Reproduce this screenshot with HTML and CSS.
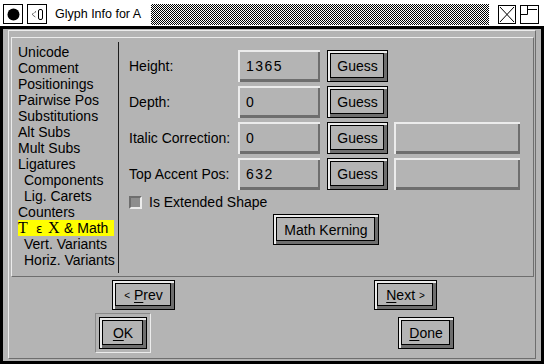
FILE: index.html
```html
<!DOCTYPE html>
<html lang="en">
<head>
    <meta charset="UTF-8">
    <title>Glyph Info for A</title>
    <link rel="stylesheet" href="styles.css">
</head>
<body>
    <div class="window">
        <div class="titlebar">
            <span class="tb-box">
                <svg width="18" height="18" viewBox="0 0 18 18"><circle cx="9.5" cy="9.5" r="6" fill="#000"/></svg>
            </span>
            <span class="tb-box gap">
                <svg width="18" height="18" viewBox="0 0 18 18">
                    <polyline points="8,6.5 4,9.5 8,12.5" fill="none" stroke="#000" stroke-dasharray="1 1"/>
                    <rect x="10.5" y="4.5" width="4" height="10" rx="1.5" fill="none" stroke="#000"/>
                </svg>
            </span>
            <span class="title">Glyph Info for A</span>
            <span class="stipple"></span>
            <span class="tb-box close">
                <svg width="16" height="17" viewBox="0 0 16 17"><path d="M1 1 L15 16 M15 1 L1 16" stroke="#000" fill="none"/></svg>
            </span>
            <span class="tb-box max">
                <svg width="17" height="17" viewBox="0 0 17 17"><path d="M6.5 0 V8.5 H0 M6.5 3.5 H16" stroke="#000" fill="none"/></svg>
            </span>
        </div>

        <div class="frame">
            <div class="dialog">
                <div class="tabset">
                    <ul class="tabs">
                        <li>Unicode</li>
                        <li>Comment</li>
                        <li>Positionings</li>
                        <li>Pairwise Pos</li>
                        <li>Substitutions</li>
                        <li>Alt Subs</li>
                        <li>Mult Subs</li>
                        <li>Ligatures</li>
                        <li class="sub">Components</li>
                        <li class="sub">Lig. Carets</li>
                        <li>Counters</li>
                        <li class="active"><span class="tex t">T</span><span class="eps">ε</span><span class="tex x">X</span>&amp; Math</li>
                        <li class="sub">Vert. Variants</li>
                        <li class="sub">Horiz. Variants</li>
                    </ul>
                    <div class="sep"></div>
                    <div class="pane">
                        <div class="fields">
                            <span class="label">Height:</span>
                            <span class="field">1365</span>
                            <button class="btn guess">Guess</button>
                            <span></span>

                            <span class="label">Depth:</span>
                            <span class="field">0</span>
                            <button class="btn guess">Guess</button>
                            <span></span>

                            <span class="label">Italic Correction:</span>
                            <span class="field">0</span>
                            <button class="btn guess">Guess</button>
                            <span class="field wide"></span>

                            <span class="label">Top Accent Pos:</span>
                            <span class="field">632</span>
                            <button class="btn guess">Guess</button>
                            <span class="field wide"></span>
                        </div>
                        <div class="check">
                            <span class="checkbox"></span>
                            <span>Is Extended Shape</span>
                        </div>
                        <div class="kern-row">
                            <button class="btn kern">Math Kerning</button>
                        </div>
                    </div>
                </div>

                <div class="nav-row">
                    <button class="btn nav prev"><span class="arrow">&lt;</span>&nbsp;<u>P</u>rev</button>
                    <button class="btn nav next"><u>N</u>ext&nbsp;<span class="arrow">&gt;</span></button>
                </div>
                <div class="nav-row ok-row">
                    <span class="default-frame">
                        <button class="btn ok"><u>O</u>K</button>
                    </span>
                    <button class="btn done"><u>D</u>one</button>
                </div>
            </div>
        </div>
    </div>
</body>
</html>
```

FILE: styles.css
```css
:root {
    --bg: #b4b4b4;
    --light: #ececec;
    --dark: #6e6e6e;
}

* {
    box-sizing: border-box;
    margin: 0;
    padding: 0;
}

body {
    background: var(--bg);
    font-family: 'Liberation Sans', Arial, sans-serif;
    font-size: 14px;
    color: #000;
}

.window {
    width: 544px;
    height: 364px;
    display: flex;
    flex-direction: column;
}

/* Title bar */
.titlebar {
    height: 29px;
    background: #fff;
    border-bottom: 3px solid #000;
    display: flex;
    align-items: flex-start;
    padding: 4px 5px 0 3px;
}

.tb-box {
    width: 20px;
    height: 20px;
    border: 1px solid #000;
    background: #fff;
    display: flex;
}

.tb-box.gap {
    margin-left: 4px;
}

.title {
    width: 96px;
    margin-left: 8px;
    line-height: 20px;
    font-size: 12.5px;
}

.stipple {
    flex: 1;
    height: 21px;
    margin-right: 9px;
    background: repeating-conic-gradient(#000 0 25%, #fff 0 50%) 0 0 / 2px 2px;
}

.tb-box.close {
    width: 18px;
    height: 19px;
    margin-top: 1px;
}

.tb-box.max {
    width: 19px;
    height: 19px;
    margin-top: 1px;
    margin-left: 4px;
}

/* Dialog body */
.frame {
    flex: 1;
    display: flex;
    background: var(--bg);
    border: 3px solid #000;
    border-top: 0;
    padding: 1px 5px 2px 5px;
}

.dialog {
    flex: 1;
    border: 1px solid;
    border-color: var(--light) var(--dark) var(--dark) var(--light);
    padding: 6px 1px 0 2px;
}

.tabset {
    height: 240px;
    display: flex;
    border: 1px solid;
    border-color: var(--light) var(--dark) var(--dark) var(--light);
}

.tabs {
    width: 106px;
    list-style: none;
    padding: 6px 0 0 6px;
}

.tabs li {
    width: 96px;
    height: 16px;
    line-height: 16px;
    white-space: nowrap;
}

.tabs li.sub {
    padding-left: 6px;
}

.tabs li.active {
    background: #ffff00;
}

.tex {
    display: inline-block;
    font-family: 'Liberation Serif', 'Times New Roman', serif;
    font-size: 16px;
}

.tex.t {
    width: 18px;
}

.tex.x {
    width: 16px;
}

.eps {
    display: inline-block;
    width: 12px;
    font-family: 'DejaVu Sans', sans-serif;
    font-size: 12px;
}

.sep {
    width: 1px;
    background: #1e1e1e;
    margin: 4px 0 3px 0;
}

.pane {
    flex: 1;
    padding-top: 12px;
}

.fields {
    display: grid;
    grid-template-columns: 109px 89px 67px 126px;
    grid-auto-rows: 32px;
    row-gap: 4px;
    align-items: center;
    padding-left: 10px;
}

.field {
    width: 82px;
    height: 32px;
    padding-left: 8px;
    line-height: 32px;
    letter-spacing: 1.5px;
    box-shadow: inset 2px 2px 0 var(--light), inset -2px -3px 0 var(--dark);
}

.field.wide {
    width: 126px;
}

.btn {
    font-family: inherit;
    font-size: 14px;
    color: #000;
    background: var(--bg);
    border: 1px solid #000;
    box-shadow:
        inset 2px 2px 0 var(--light),
        inset -3px -3px 0 var(--dark),
        inset 3px 3px 0 #000,
        inset -4px -4px 0 #000;
    display: flex;
    align-items: center;
    justify-content: center;
}

.btn u {
    text-underline-offset: 2px;
}

.guess {
    width: 61px;
    height: 32px;
}

.check {
    display: flex;
    align-items: center;
    height: 16px;
    line-height: 16px;
    margin-top: 4px;
    padding-left: 10px;
}

.checkbox {
    width: 13px;
    height: 13px;
    margin-right: 7px;
    background: #8e8e8e;
    border: 2px solid;
    border-color: var(--dark) var(--light) var(--light) var(--dark);
}

.kern-row {
    display: flex;
    justify-content: center;
    margin-top: 4px;
}

.kern {
    width: 106px;
    height: 31px;
}

/* Bottom buttons */
.nav-row {
    display: flex;
    align-items: flex-start;
    margin-top: 3px;
    padding-left: 101px;
}

.nav {
    width: 63px;
    height: 30px;
}

.next {
    margin-left: 199px;
}

.arrow {
    font-size: 10px;
}

.ok-row {
    padding-left: 84px;
}

.default-frame {
    display: flex;
    padding: 3px;
    border: 1px solid;
    border-color: #8a8a8a var(--light) var(--light) #8a8a8a;
}

.ok {
    width: 48px;
    height: 32px;
}

.done {
    width: 56px;
    height: 32px;
    margin-left: 247px;
    margin-top: 4px;
}
```
